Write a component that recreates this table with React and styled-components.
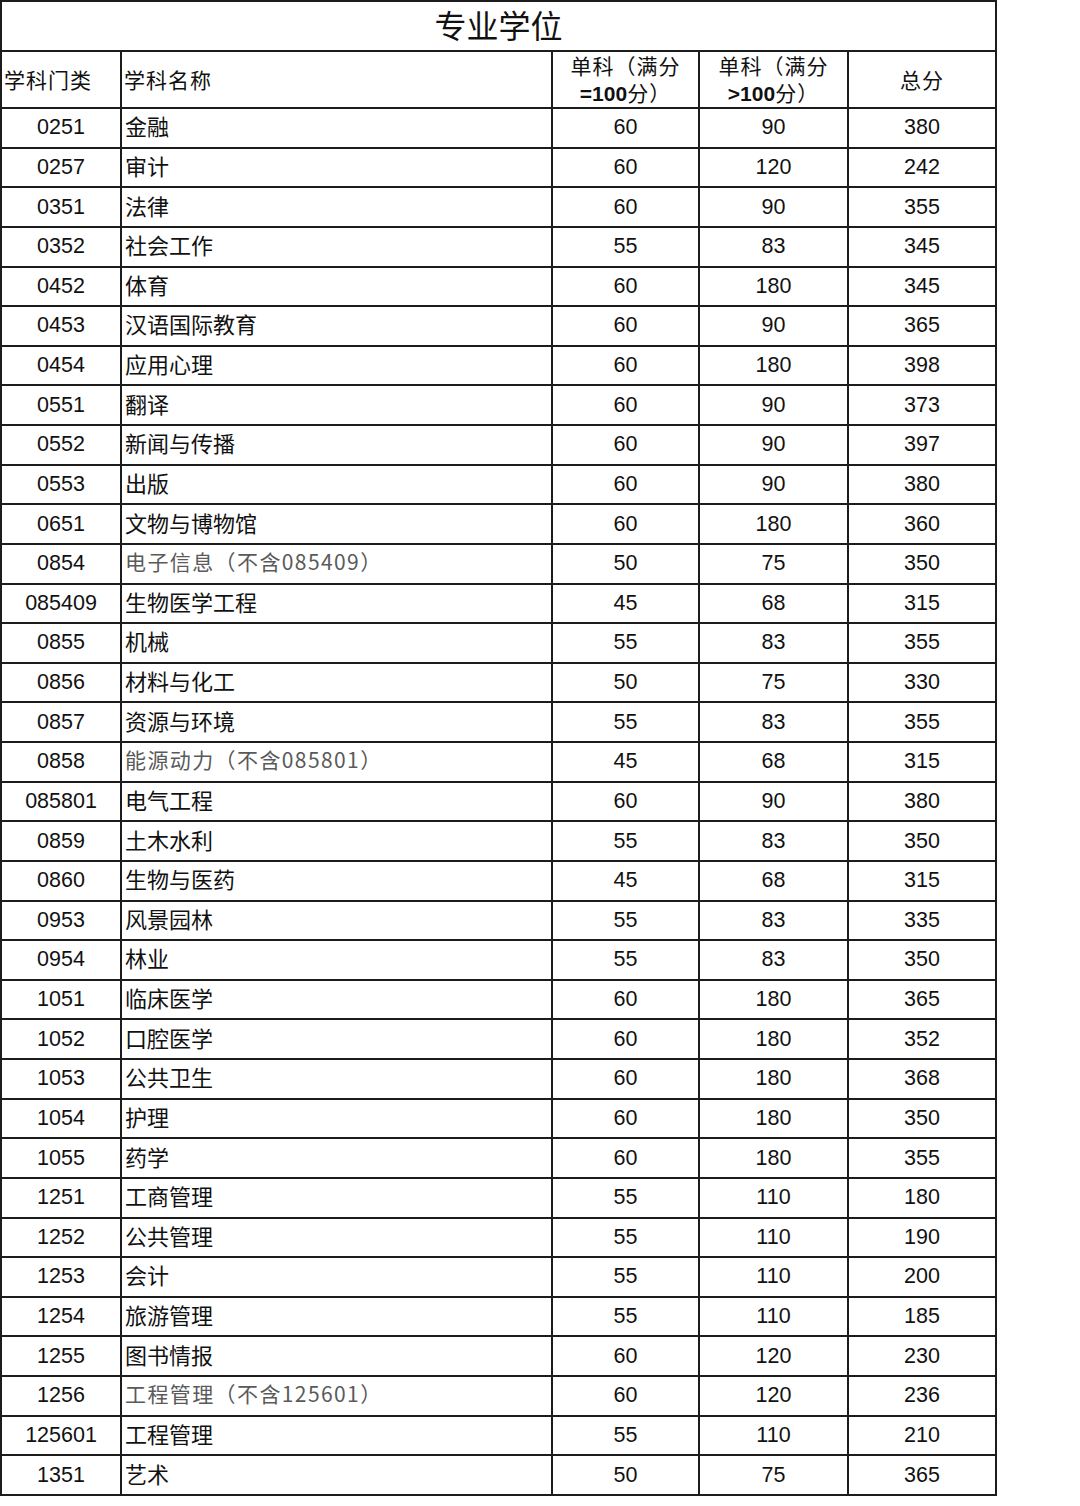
import styled, { createGlobalStyle } from 'styled-components';

const rows = [
  ['0251', '金融', 60, 90, 380],
  ['0257', '审计', 60, 120, 242],
  ['0351', '法律', 60, 90, 355],
  ['0352', '社会工作', 55, 83, 345],
  ['0452', '体育', 60, 180, 345],
  ['0453', '汉语国际教育', 60, 90, 365],
  ['0454', '应用心理', 60, 180, 398],
  ['0551', '翻译', 60, 90, 373],
  ['0552', '新闻与传播', 60, 90, 397],
  ['0553', '出版', 60, 90, 380],
  ['0651', '文物与博物馆', 60, 180, 360],
  ['0854', '电子信息（不含085409）', 50, 75, 350, true],
  ['085409', '生物医学工程', 45, 68, 315],
  ['0855', '机械', 55, 83, 355],
  ['0856', '材料与化工', 50, 75, 330],
  ['0857', '资源与环境', 55, 83, 355],
  ['0858', '能源动力（不含085801）', 45, 68, 315, true],
  ['085801', '电气工程', 60, 90, 380],
  ['0859', '土木水利', 55, 83, 350],
  ['0860', '生物与医药', 45, 68, 315],
  ['0953', '风景园林', 55, 83, 335],
  ['0954', '林业', 55, 83, 350],
  ['1051', '临床医学', 60, 180, 365],
  ['1052', '口腔医学', 60, 180, 352],
  ['1053', '公共卫生', 60, 180, 368],
  ['1054', '护理', 60, 180, 350],
  ['1055', '药学', 60, 180, 355],
  ['1251', '工商管理', 55, 110, 180],
  ['1252', '公共管理', 55, 110, 190],
  ['1253', '会计', 55, 110, 200],
  ['1254', '旅游管理', 55, 110, 185],
  ['1255', '图书情报', 60, 120, 230],
  ['1256', '工程管理（不含125601）', 60, 120, 236, true],
  ['125601', '工程管理', 55, 110, 210],
  ['1351', '艺术', 50, 75, 365]
];

export default function App() {
  return (
    <>
      <GlobalStyle />
      <Sheet>
        <colgroup>
          <col style={{ width: 120 }} />
          <col style={{ width: 431 }} />
          <col style={{ width: 147 }} />
          <col style={{ width: 149 }} />
          <col style={{ width: 148 }} />
        </colgroup>
        <thead>
          <TitleRow>
            <Title colSpan={5}>专业学位</Title>
          </TitleRow>
          <HeadRow>
            <HeadCell align='left'>学科门类</HeadCell>
            <HeadCell align='left'>学科名称</HeadCell>
            <HeadCell>
              单科（满分
              <br />
              <b>=100</b>分）
            </HeadCell>
            <HeadCell>
              单科（满分
              <br />
              <b>&gt;100</b>分）
            </HeadCell>
            <HeadCell>总分</HeadCell>
          </HeadRow>
        </thead>
        <tbody>
          {rows.map(([code, name, a, b, total, note]) => (
            <Row key={code + name}>
              <Num>{code}</Num>
              <Name note={note ? 1 : 0}>{name}</Name>
              <Num>{a}</Num>
              <Num>{b}</Num>
              <Num>{total}</Num>
            </Row>
          ))}
        </tbody>
      </Sheet>
    </>
  );
}

const GlobalStyle = createGlobalStyle`
  body {
    margin: 0;
    background: #fff;
    color: #111;
    font-family: 'Noto Sans CJK SC', sans-serif;
  }
`;

const Sheet = styled.table`
  border-collapse: collapse;
  table-layout: fixed;
  width: 995px;
  margin: 0;

  td,
  th {
    border: 2px solid #1c1c1c;
    padding: 0;
  }
`;

const TitleRow = styled.tr`
  height: 50px;
`;

const Title = styled.th`
  font-family: 'Noto Sans CJK SC', sans-serif;
  font-size: 32px;
  font-weight: 400;
  line-height: 40px;
  text-align: center;
  padding-bottom: 4px !important;
`;

const HeadRow = styled.tr`
  height: 56px;
`;

const HeadCell = styled.th`
  font-family: 'Noto Sans CJK SC', sans-serif;
  font-size: 21px;
  font-weight: 400;
  line-height: 27px;
  text-align: ${p => p.align || 'center'};
  padding: 0 2px !important;
  letter-spacing: 1px;

  b {
    font-family: 'Liberation Sans', sans-serif;
    font-weight: 700;
    letter-spacing: 0;
  }
`;

const Row = styled.tr`
  height: 39.63px;
`;

const Num = styled.td`
  font-family: 'Liberation Sans', sans-serif;
  font-size: 21.5px;
  text-align: center;
  vertical-align: middle;
`;

const Name = styled.td`
  font-family: 'Noto Sans CJK SC', sans-serif;
  font-size: ${p => (p.note ? '21px' : '22px')};
  color: ${p => (p.note ? '#5a5a5a' : '#111')};
  letter-spacing: ${p => (p.note ? '1.4px' : '0')};
  line-height: 28px;
  padding: 0 0 5px 3px !important;
  text-align: left;
  vertical-align: middle;
`;
